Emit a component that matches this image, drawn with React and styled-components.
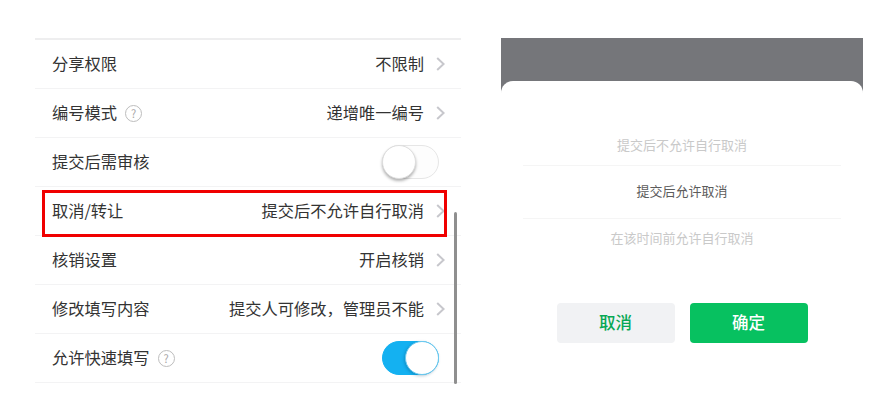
import React from 'react';
import styled, { createGlobalStyle } from 'styled-components';

const rows = [
  { label: '分享权限', value: '不限制' },
  { label: '编号模式', value: '递增唯一编号', help: true },
  { label: '提交后需审核', toggle: 'off' },
  { label: '取消/转让', value: '提交后不允许自行取消', marked: true },
  { label: '核销设置', value: '开启核销' },
  { label: '修改填写内容', value: '提交人可修改，管理员不能' },
  { label: '允许快速填写', toggle: 'on', help: true },
];

const options = [
  { text: '提交后不允许自行取消', height: 39 },
  { text: '提交后允许取消', height: 53, active: true },
  { text: '在该时间前允许自行取消', height: 40 },
];

const Chevron = () => (
  <ChevronIcon viewBox="0 0 9 14" fill="none">
    <path d="M1.2 1 L7.6 7 L1.2 13" stroke="#c7c7cc" strokeWidth="2" />
  </ChevronIcon>
);

const App = () => (
  <>
    <GlobalStyle />
    <Page>
      <List>
        {rows.map((row) => (
          <Row key={row.label}>
            <Label>{row.label}</Label>
            {row.help && <Help>?</Help>}
            <Spacer />
            {row.value && (
              <>
                <Value>{row.value}</Value>
                <Chevron />
              </>
            )}
            {row.toggle && (
              <Toggle $on={row.toggle === 'on'}>
                <Knob $on={row.toggle === 'on'} />
              </Toggle>
            )}
            {row.marked && <Highlight />}
          </Row>
        ))}
        <Scrollbar />
      </List>
      <Panel>
        <Sheet>
          <Options>
            {options.map((option) => (
              <Option key={option.text} $height={option.height} $active={option.active}>
                {option.text}
              </Option>
            ))}
          </Options>
          <Buttons>
            <Button>取消</Button>
            <Button $primary>确定</Button>
          </Buttons>
        </Sheet>
      </Panel>
    </Page>
  </>
);

export default App;

const GlobalStyle = createGlobalStyle`
  html, body {
    margin: 0;
    background: #fff;
    font-family: "Noto Sans CJK SC", "Liberation Sans", sans-serif;
  }
`;

const Page = styled.div`
  display: flex;
  align-items: flex-start;
  gap: 40px;
  width: 888px;
  height: 418px;
  padding: 38px 0 0 35px;
  box-sizing: border-box;
  overflow: hidden;
`;

const List = styled.div`
  position: relative;
  width: 426px;
  flex: none;
  border-top: 2px solid #eeeeef;
`;

const Row = styled.div`
  position: relative;
  display: flex;
  align-items: center;
  height: 49px;
  padding: 0 16px 0 17px;
  box-sizing: border-box;
  border-bottom: 1px solid #f3f3f4;

  &:last-of-type {
    border-bottom: 2px solid #eeeeef;
    height: 50px;
  }
`;

const Label = styled.span`
  font-size: 16.25px;
  line-height: 24px;
  padding-bottom: 3px;
  color: #333;
`;

const Value = styled.span`
  font-size: 16.25px;
  line-height: 24px;
  padding-bottom: 3px;
  color: #333;
  margin-right: 12px;
`;

const Spacer = styled.div`
  flex: 1;
`;

const Help = styled.span`
  width: 17px;
  height: 17px;
  margin-left: 8px;
  margin-top: 1px;
  box-sizing: border-box;
  border: 1.5px solid #bdbdbd;
  border-radius: 50%;
  display: flex;
  align-items: center;
  justify-content: center;
  font-size: 11px;
  line-height: 1;
  color: #a8a8a8;
`;

const ChevronIcon = styled.svg`
  width: 9px;
  height: 14px;
  flex: none;
`;

const Toggle = styled.div`
  position: relative;
  width: 57px;
  height: 34px;
  margin-right: 6px;
  box-sizing: border-box;
  border-radius: 17px;
  background: ${({ $on }) => ($on ? '#14b1f1' : '#fdfdfd')};
  border: 1px solid ${({ $on }) => ($on ? '#14b1f1' : '#e6e6e6')};
`;

const Knob = styled.div`
  position: absolute;
  top: -1px;
  ${({ $on }) => ($on ? 'right: -1px;' : 'left: -1px;')}
  width: 34px;
  height: 34px;
  box-sizing: border-box;
  border-radius: 50%;
  background: #fff;
  border: 1px solid ${({ $on }) => ($on ? '#6cc9ef' : '#dedede')};
  box-shadow: ${({ $on }) => ($on ? '-1px 1px 3px rgba(0, 70, 110, 0.3)' : '0 2px 3px rgba(0, 0, 0, 0.3)')};
`;

const Highlight = styled.div`
  position: absolute;
  left: 7px;
  top: 3px;
  width: 405px;
  height: 47px;
  box-sizing: border-box;
  border: 3px solid #f00000;
`;

const Scrollbar = styled.div`
  position: absolute;
  top: 172px;
  right: 4px;
  width: 3px;
  height: 172px;
  border-radius: 2px;
  background: #8f8f8f;
`;

const Panel = styled.div`
  width: 362px;
  flex: none;
  padding-top: 43px;
  background: linear-gradient(#75767a 0 60px, #fff 60px);
`;

const Sheet = styled.div`
  height: 297px;
  padding: 46px 22px 0;
  box-sizing: border-box;
  background: #fff;
  border-radius: 12px 12px 0 0;
`;

const Options = styled.div`
  display: flex;
  flex-direction: column;
`;

const Option = styled.div`
  display: flex;
  align-items: center;
  justify-content: center;
  height: ${({ $height }) => $height}px;
  padding-bottom: 3px;
  box-sizing: border-box;
  font-size: 13px;
  color: ${({ $active }) => ($active ? '#5c5c5c' : '#c9c9c9')};
  border-bottom: 1px solid #f5f5f5;

  &:last-child {
    border-bottom: none;
  }
`;

const Buttons = styled.div`
  display: flex;
  justify-content: center;
  gap: 15px;
  margin-top: 44px;
`;

const Button = styled.div`
  display: flex;
  align-items: center;
  justify-content: center;
  width: 118px;
  height: 40px;
  padding-bottom: 2px;
  box-sizing: border-box;
  border-radius: 4px;
  font-size: 16.5px;
  font-weight: 500;
  background: ${({ $primary }) => ($primary ? '#07c160' : '#f1f2f4')};
  color: ${({ $primary }) => ($primary ? '#fff' : '#07a854')};
`;
